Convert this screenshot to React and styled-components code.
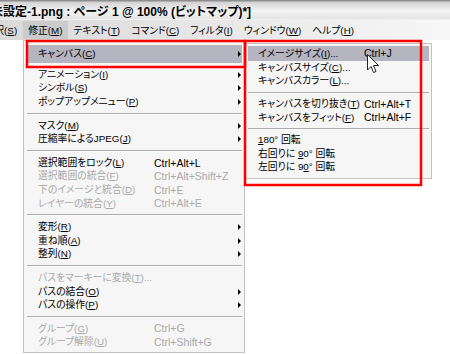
import React from 'react';
import styled, { createGlobalStyle } from 'styled-components';

const GlobalStyle = createGlobalStyle`
  html, body {
    margin: 0;
    padding: 0;
    background: #fff;
  }
  body {
    width: 450px;
    height: 354px;
    overflow: hidden;
    font-family: "Liberation Sans", "Noto Sans CJK JP", sans-serif;
    font-feature-settings: "palt";
  }
`;

const Screen = styled.div`
  position: relative;
  width: 450px;
  height: 354px;
  overflow: hidden;
  display: flex;
  flex-direction: column;
  background: #fff;
`;

const TitleBar = styled.div`
  flex: none;
  height: 20px;
  display: flex;
  align-items: center;
  white-space: nowrap;
  font-size: 12px;
  font-weight: bold;
  color: #000;
  background: linear-gradient(#8e8e8e 0, #8e8e8e 1px, #d2d2d2 2px, #f3f3f3 11px, #e4e4e4 19px, #fafafa 20px);

  span {
    margin-left: -9px;
  }
`;

const MenuBar = styled.div`
  flex: none;
  height: 20px;
  display: flex;
  align-items: center;
  white-space: nowrap;
  font-size: 9.8px;
  background: linear-gradient(to right, #d8d8d8, #e9e9e9 55%, #f7f7f7);
  margin-left: -21px;
`;

const BarItem = styled.div`
  height: 18px;
  display: flex;
  align-items: center;
  padding: 0 5.5px;
  background: ${(p) => (p.$open ? '#cbcbcb' : 'transparent')};
`;

const Workspace = styled.div`
  flex: 1;
  display: flex;
  align-items: flex-start;
  padding-left: 23px;
  background: #fff;
`;

const Menu = styled.div`
  flex: none;
  box-sizing: border-box;
  width: ${(p) => p.$width}px;
  margin-top: ${(p) => p.$top}px;
  padding: ${(p) => p.$pad};
  background: #f6f6f6;
  border: 1px solid #c2c2c2;
`;

const Row = styled.div`
  display: grid;
  grid-template-columns: ${(p) => p.$label}px 1fr 4px;
  align-items: center;
  height: ${(p) => p.$h || 13.6}px;
  margin-bottom: ${(p) => p.$after || 0}px;
  padding: 0 1px 0 ${(p) => p.$indent}px;
  white-space: nowrap;
  font-size: 9.8px;
  line-height: 1;
  color: ${(p) => (p.$disabled ? '#a9a9a9' : '#000')};
  background: ${(p) => (p.$active ? '#b5b4c1' : 'transparent')};
`;

const Shortcut = styled.span`
  font-size: 10.5px;
`;

const Arrow = styled.i`
  justify-self: end;
  width: 0;
  height: 0;
  border-left: 3px solid #000;
  border-top: 3px solid transparent;
  border-bottom: 3px solid transparent;
`;

const Separator = styled.div`
  height: ${(p) => p.$h}px;
  display: flex;
  align-items: center;

  &::before {
    content: '';
    flex: 1;
    border-top: 1px solid #acacac;
    border-bottom: 1px solid #fdfdfd;
  }
`;

const Overlay = styled.svg`
  position: absolute;
  left: 0;
  top: 0;
  pointer-events: none;
`;

const titleText = '未設定-1.png : ページ 1 @ 100% (ビットマップ)*]';

const barItems = ['選択(&S)', '修正(&M)', 'テキスト(&T)', 'コマンド(&C)', 'フィルタ(&I)', 'ウィンドウ(&W)', 'ヘルプ(&H)'];

const mainItems = [
  { label: 'キャンバス(&C)', arrow: true, active: true, h: 18, after: 5 },
  { label: 'アニメーション(&I)', arrow: true },
  { label: 'シンボル(&S)', arrow: true },
  { label: 'ポップアップメニュー(&P)', arrow: true },
  'sep',
  { label: 'マスク(&M)', arrow: true },
  { label: '圧縮率によるJPEG(&J)', arrow: true },
  'sep',
  { label: '選択範囲をロック(&L)', sc: 'Ctrl+Alt+L' },
  { label: '選択範囲の統合(&F)', sc: 'Ctrl+Alt+Shift+Z', disabled: true },
  { label: '下のイメージと統合(&D)', sc: 'Ctrl+E', disabled: true },
  { label: 'レイヤーの統合(&Y)', sc: 'Ctrl+Alt+E', disabled: true },
  'sep',
  { label: '変形(&R)', arrow: true },
  { label: '重ね順(&A)', arrow: true },
  { label: '整列(&N)', arrow: true },
  'sep',
  { label: 'パスをマーキーに変換(&T)...', disabled: true },
  { label: 'パスの結合(&O)', arrow: true },
  { label: 'パスの操作(&P)', arrow: true },
  'sep',
  { label: 'グループ(&G)', sc: 'Ctrl+G', disabled: true },
  { label: 'グループ解除(&U)', sc: 'Ctrl+Shift+G', disabled: true },
];

const canvasItems = [
  { label: 'イメージサイズ(&I)...', sc: 'Ctrl+J', active: true, h: 15 },
  { label: 'キャンバスサイズ(&C)...' },
  { label: 'キャンバスカラー(&L)...' },
  'sep',
  { label: 'キャンバスを切り抜き(&T)', sc: 'Ctrl+Alt+T' },
  { label: 'キャンバスをフィット(&F)', sc: 'Ctrl+Alt+F' },
  'sep',
  { label: '&180° 回転' },
  { label: '右回りに &90° 回転' },
  { label: '左回りに 9&0° 回転' },
];

// "&X" marks the underlined access key
const Mnemonic = ({ text }) => {
  const i = text.indexOf('&');
  if (i < 0) return text;
  return (
    <>
      {text.slice(0, i)}
      <u>{text[i + 1]}</u>
      {text.slice(i + 2)}
    </>
  );
};

const MenuList = ({ items, width, top, pad, label, indent, sep }) => (
  <Menu $width={width} $top={top} $pad={pad}>
    {items.map((it, i) =>
      it === 'sep' ? (
        <Separator key={i} $h={sep} />
      ) : (
        <Row
          key={i}
          $label={label}
          $indent={indent}
          $h={it.h}
          $after={it.after}
          $active={it.active}
          $disabled={it.disabled}
        >
          <span>
            <Mnemonic text={it.label} />
          </span>
          <Shortcut>{it.sc}</Shortcut>
          {it.arrow ? <Arrow /> : <span />}
        </Row>
      )
    )}
  </Menu>
);

const App = () => {
  return (
    <Screen>
      <GlobalStyle />
      <TitleBar>
        <span>{titleText}</span>
      </TitleBar>
      <MenuBar>
        {barItems.map((t) => (
          <BarItem key={t} $open={t === '修正(&M)'}>
            <Mnemonic text={t} />
          </BarItem>
        ))}
      </MenuBar>
      <Workspace>
        <MenuList items={mainItems} width={222} top={0} pad="4px 2px 3px 3px" label={116} indent={11} sep={10} />
        <MenuList items={canvasItems} width={187} top={3} pad="2px 2px 4px 2px" label={106} indent={10} sep={9} />
      </Workspace>

      <Overlay width="450" height="354">
        <rect x="27" y="41" width="218" height="26" fill="none" stroke="#f00" strokeWidth="2.5" />
        <rect x="245" y="41" width="176" height="144" fill="none" stroke="#f00" strokeWidth="2.5" />
        <path
          d="M367.5 54.5 L367.5 70 L371 66.5 L373.5 72.5 L376 71.5 L373.5 65.5 L378.5 65.5 Z"
          fill="#fff"
          stroke="#222"
          strokeWidth="1"
          strokeLinejoin="round"
        />
      </Overlay>
    </Screen>
  );
};

export default App;
